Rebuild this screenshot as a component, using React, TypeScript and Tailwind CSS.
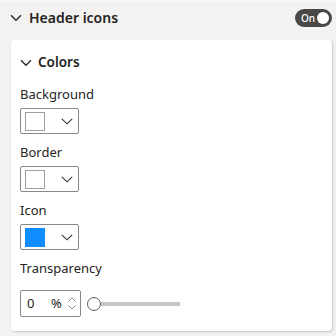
import React from "react";

const Chevron = () => (
  <svg width="12" height="8" viewBox="0 0 12 8">
    <path d="M1 1.3 L6 6.3 L11 1.3" fill="none" stroke="#252423" strokeWidth="1.3" />
  </svg>
);

const SmallChevron = () => (
  <svg width="12" height="7" viewBox="0 0 12 7">
    <path d="M0.8 0.8 L6 5.8 L11.2 0.8" fill="none" stroke="#323130" strokeWidth="1.1" />
  </svg>
);

const ColorPicker = ({ color, bordered }: { color: string; bordered?: boolean }) => (
  <div className="flex h-[26px] w-[59px] items-center rounded-[2px] border border-[#8a8886] bg-white pl-[4px]">
    <div
      className={`h-[19px] w-[20px] ${bordered ? "border border-[#a19f9d]" : ""}`}
      style={{ backgroundColor: color }}
    />
    <div className="ml-[16px] flex items-center">
      <SmallChevron />
    </div>
  </div>
);

export default function App() {
  return (
    <div
      className="flex h-[336px] w-[336px] flex-col bg-[#f3f2f1] text-[#252423]"
      style={{ fontFamily: '"Noto Sans", "Open Sans", sans-serif' }}
    >
      <div className="h-[2px] bg-[#faf9f8]" />
      <div className="flex h-[32px] items-center justify-between pl-[10px] pr-[4px]">
        <div className="flex items-center gap-[7px]">
          <Chevron />
          <span className="text-[14px] font-semibold leading-none">Header icons</span>
        </div>
        <div className="flex h-[18px] w-[37px] items-center justify-between rounded-full bg-[#4a4846] pl-[6px] pr-[3px]">
          <span className="text-[10px] font-medium leading-none text-white">On</span>
          <div className="h-[12px] w-[12px] rounded-full bg-white" />
        </div>
      </div>
      <div className="ml-[11px] mr-[4px] mt-[6px] h-[291px] rounded-[4px] bg-white pl-[9px] shadow-[1px_1px_2px_rgba(0,0,0,0.18)]">
        <div className="flex h-[44px] items-center gap-[6px] pt-[2px]">
          <Chevron />
          <span className="text-[13.5px] font-semibold leading-none">Colors</span>
        </div>
        <div className="flex flex-col">
          <div className="h-[20px] text-[13px] leading-[20px]">Background</div>
          <div className="mt-[4px]">
            <ColorPicker color="#ffffff" bordered />
          </div>
          <div className="mt-[8px] h-[20px] text-[13px] leading-[20px]">Border</div>
          <div className="mt-[4px]">
            <ColorPicker color="#ffffff" bordered />
          </div>
          <div className="mt-[8px] h-[20px] text-[13px] leading-[20px]">Icon</div>
          <div className="mt-[4px]">
            <ColorPicker color="#118dff" />
          </div>
          <div className="mt-[8px] h-[20px] text-[13px] leading-[20px]">Transparency</div>
          <div className="mt-[12px] flex items-center">
            <div className="flex h-[27px] w-[61px] items-center rounded-[2px] border border-[#8a8886] bg-white pl-[6px] pr-[4px] text-[13px]">
              <span className="w-[24px]">0</span>
              <span>%</span>
              <div className="ml-auto flex flex-col gap-[3px]">
                <svg width="8" height="5" viewBox="0 0 8 5">
                  <path d="M0.5 4.5 L4 1 L7.5 4.5" fill="none" stroke="#8a8886" strokeWidth="1" />
                </svg>
                <svg width="8" height="5" viewBox="0 0 8 5">
                  <path d="M0.5 0.5 L4 4 L7.5 0.5" fill="none" stroke="#8a8886" strokeWidth="1" />
                </svg>
              </div>
            </div>
            <div className="ml-[6px] flex items-center">
              <div className="h-[14px] w-[14px] rounded-full border-[1.5px] border-[#605e5c] bg-white" />
              <div className="h-[4px] w-[79px] bg-[#c8c6c4]" />
            </div>
          </div>
        </div>
      </div>
    </div>
  );
}
